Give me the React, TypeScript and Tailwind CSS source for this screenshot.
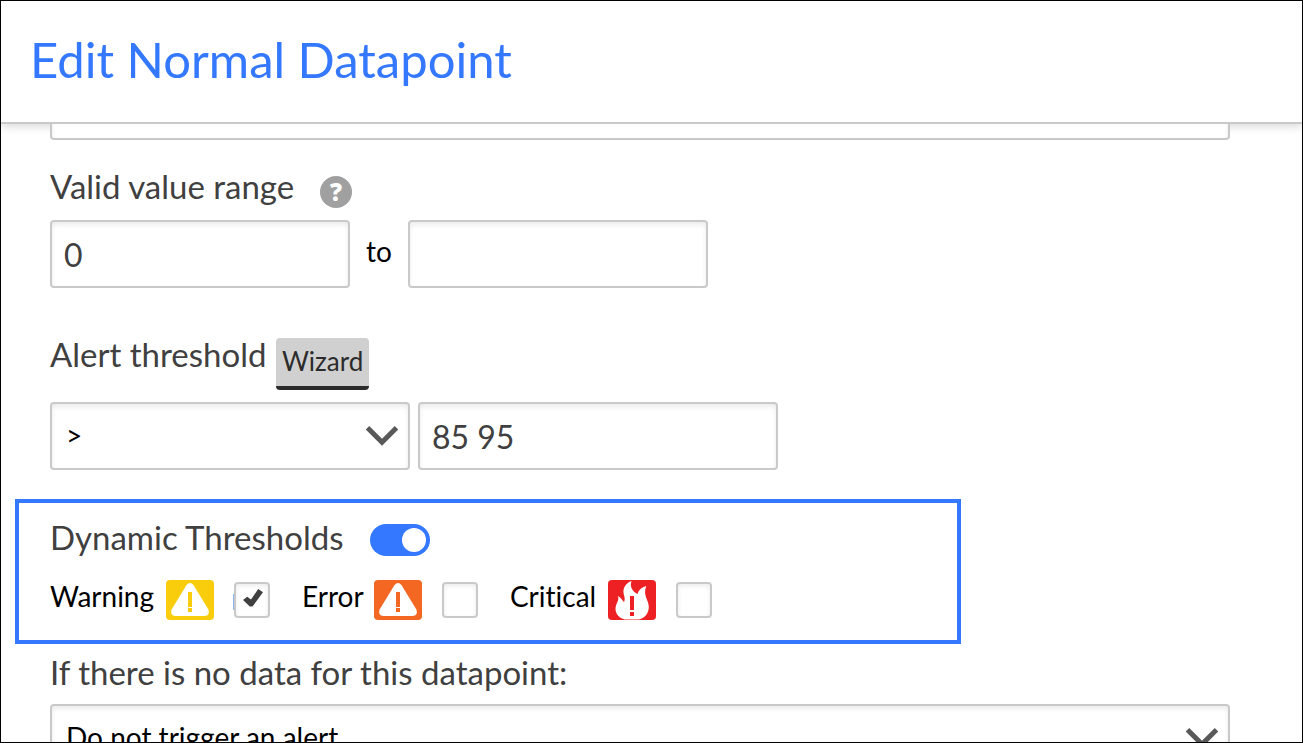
import { useState } from 'react'
import type { ReactNode } from 'react'
import clsx from 'clsx'

const fieldClass =
  'h-[68px] rounded border-2 border-[#c9c9c9] bg-white shadow-[inset_0_3px_5px_rgba(0,0,0,0.08)] outline-none'

function Chevron() {
  return (
    <svg
      viewBox="0 0 32 20"
      className="pointer-events-none absolute top-6 right-3 h-5 w-8"
      fill="none"
      stroke="#595959"
      strokeWidth="5"
    >
      <path d="M1.5 1.8 16 16.2 30.5 1.8" />
    </svg>
  )
}

function AlertIcon({ color }: { color: string }) {
  return (
    <svg viewBox="0 0 48 40" className="h-10 w-12 shrink-0">
      <rect width="48" height="40" rx="4" fill={color} />
      <path
        d="M20.4 5.2Q24 .8 27.6 5.2L42.4 29.6Q44.4 36 38.6 36H9.4Q3.6 36 5.6 29.6Z"
        fill="#fff"
      />
      <path d="M22 12h4v15h-4zM22 28h4v4h-4z" fill={color} />
    </svg>
  )
}

function FireIcon() {
  return (
    <svg viewBox="0 0 48 40" className="h-10 w-12 shrink-0">
      <rect width="48" height="40" rx="4" fill="#ed2024" />
      <path
        d="M23.5 1C18 3 15 7.5 15.5 12.5C15.8 16 17.8 18.5 16 22C14.5 20.5 13.5 18 9.7 16C12 20 7.5 23.5 7.5 29C7.5 34.5 12 38.5 17 39.5H31C37 38 40.8 33 40.8 27C40.8 20 34.5 15.5 38.3 6C33.5 7.5 30.5 10 29.5 14C24.5 11.5 21.5 7 23.5 1Z"
        fill="#fff"
      />
      <path d="M22 16h4v14h-4zM22 32h4v4h-4z" fill="#ed2024" />
    </svg>
  )
}

interface SeverityProps {
  id: string
  label: string
  icon: ReactNode
  labelClass: string
  checked: boolean
  onChange: (checked: boolean) => void
}

function Severity({ id, label, icon, labelClass, checked, onChange }: SeverityProps) {
  return (
    <div className="flex items-center">
      <label htmlFor={id} className="flex items-start text-black">
        <span className={clsx('text-[28px] leading-8', labelClass)}>
          {label}
        </span>
        {icon}
      </label>
      <span className="relative ml-5 h-9 w-9">
        {checked && (
          <span className="absolute top-3 -left-px h-4 w-1 bg-[#8fb5f5]" />
        )}
        <input
          id={id}
          type="checkbox"
          checked={checked}
          onChange={(e) => onChange(e.target.checked)}
          className="relative block h-9 w-9 appearance-none rounded border-2 border-[#c9c9c9] bg-white shadow-[inset_0_2px_5px_rgba(0,0,0,0.08)]"
        />
        {checked && (
          <svg
            viewBox="0 -1 20 18"
            className="pointer-events-none absolute top-[7px] left-[9px] h-[18px] w-5"
            fill="#404040"
          >
            <path d="M0 10 4.2 6.8 8 9.6 15.2-1 20 2.2 9.6 16.4H6.8Z" />
          </svg>
        )}
      </span>
    </div>
  )
}

export default function App() {
  const [min, setMin] = useState('0')
  const [max, setMax] = useState('')
  const [threshold, setThreshold] = useState('85 95')
  const [dynamic, setDynamic] = useState(true)
  const [severities, setSeverities] = useState({
    warning: true,
    error: false,
    critical: false,
  })

  return (
    <div className="flex h-screen flex-col overflow-hidden border border-black bg-white font-[Lato,sans-serif] text-[#404040] [font-variant-ligatures:none]">
      <header className="shrink-0 border-b-2 border-[#c9c9c9] px-[29px] pt-7 pb-[33px] shadow-[0_3px_8px_rgba(0,0,0,0.14)]">
        <h1 className="text-[49px] leading-[60px] text-[#3478ff]">
          Edit Normal Datapoint
        </h1>
      </header>

      <main className="min-h-0 flex-1 overflow-hidden pr-[72px] pl-[49px]">
        <input
          aria-label="Expression"
          className={clsx(fieldClass, '-mt-[52px] block w-full px-3 text-[32px]')}
        />

        {/* Valid value range */}
        <div className="mt-8 flex h-12 items-start">
          <label htmlFor="range-min" className="w-[270px] text-[33px] leading-7">
            Valid value range
          </label>
          <button
            aria-label="Help"
            className="mt-1 h-8 w-8 rounded-full bg-[#a0a0a0] font-['Open_Sans',sans-serif] text-2xl leading-8 font-extrabold text-white"
          >
            ?
          </button>
        </div>
        <div className="flex">
          <input
            id="range-min"
            value={min}
            onChange={(e) => setMin(e.target.value)}
            className={clsx(fieldClass, 'w-[300px] px-3 text-[32px]')}
          />
          <label
            htmlFor="range-max"
            className="w-[58px] text-center text-[28px] leading-[62px] text-black"
          >
            to
          </label>
          <input
            id="range-max"
            value={max}
            onChange={(e) => setMax(e.target.value)}
            className={clsx(fieldClass, 'w-[300px] px-3 text-[32px]')}
          />
        </div>

        {/* Alert threshold */}
        <div className="mt-[50px] flex items-start">
          <label htmlFor="threshold" className="w-[226px] text-[33px] leading-8">
            Alert threshold
          </label>
          <button className="h-[52px] rounded border-b-4 border-[#2b2b2b] bg-[#d0d0d0] px-1.5 pb-0.5 text-[26px] leading-[46px] text-[#2b2b2b]">
            Wizard
          </button>
        </div>
        <div className="mt-3 flex gap-2">
          <div className="relative">
            <select
              aria-label="Operator"
              className={clsx(
                fieldClass,
                'w-[360px] appearance-none px-3.5 pb-0.5 text-[28px] text-black',
              )}
            >
              <option>&gt;</option>
              <option>&lt;</option>
              <option>=</option>
            </select>
            <Chevron />
          </div>
          <input
            id="threshold"
            value={threshold}
            onChange={(e) => setThreshold(e.target.value)}
            className={clsx(fieldClass, 'w-[360px] px-3 text-[32px]')}
          />
        </div>

        {/* Dynamic thresholds */}
        <section className="mt-[29px] -ml-[35px] max-w-[946px] border-4 border-[#3478ff] py-5 pl-[31px]">
          <div className="flex">
            <label htmlFor="dynamic" className="w-[320px] text-[33px] leading-7">
              Dynamic Thresholds
            </label>
            <span className="relative mt-px h-8">
              <input
                id="dynamic"
                type="checkbox"
                role="switch"
                checked={dynamic}
                onChange={(e) => setDynamic(e.target.checked)}
                className="peer block h-8 w-[60px] appearance-none rounded-full bg-[#b0b0b0] checked:bg-[#3478ff]"
              />
              <span className="pointer-events-none absolute top-1 left-1 h-6 w-6 rounded-full bg-white peer-checked:left-8" />
            </span>
          </div>
          <div className="mt-6 flex gap-8">
            <Severity
              id="warning"
              label="Warning"
              labelClass="w-[116px]"
              icon={<AlertIcon color="#f9cd0b" />}
              checked={severities.warning}
              onChange={(warning) => setSeverities({ ...severities, warning })}
            />
            <Severity
              id="error"
              label="Error"
              labelClass="w-[72px]"
              icon={<AlertIcon color="#f46723" />}
              checked={severities.error}
              onChange={(error) => setSeverities({ ...severities, error })}
            />
            <Severity
              id="critical"
              label="Critical"
              labelClass="w-[98px]"
              icon={<FireIcon />}
              checked={severities.critical}
              onChange={(critical) => setSeverities({ ...severities, critical })}
            />
          </div>
        </section>

        {/* No data */}
        <label htmlFor="no-data" className="mt-3 block text-[33px] leading-8">
          If there is no data for this datapoint:
        </label>
        <div className="relative mt-4">
          <select
            id="no-data"
            className={clsx(
              fieldClass,
              'w-full appearance-none px-3.5 pb-0.5 text-[28px] text-black',
            )}
          >
            <option>Do not trigger an alert</option>
            <option>Trigger a warning alert</option>
          </select>
          <Chevron />
        </div>
      </main>
    </div>
  )
}
